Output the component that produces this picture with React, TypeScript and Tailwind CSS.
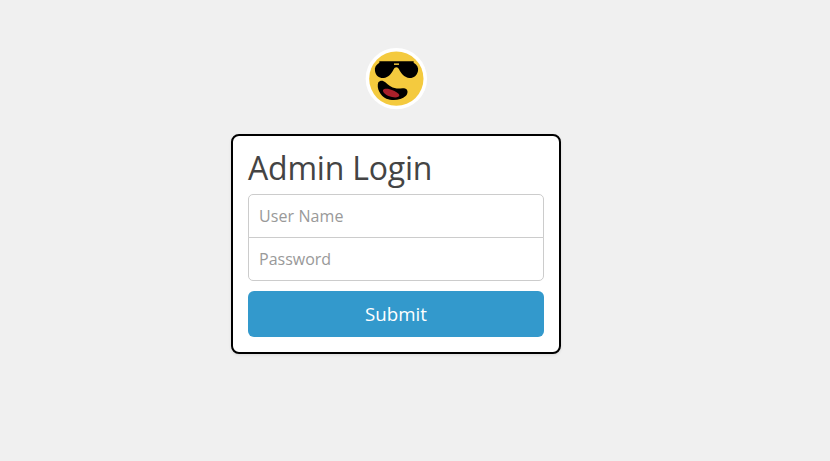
import React from "react";

function CoolFace() {
  return (
    <svg viewBox="27 30 186 186" className="block h-[62px] w-[62px]" aria-hidden="true">
      <circle cx="121" cy="122" r="92" fill="#fff" />
      <circle cx="121" cy="122" r="81.5" fill="#f4ca3e" />
      <path
        d="M70 70H173V74C184 80 188 89 186 99C183 113 172 121 160 120C146 119 136 108 129 94C126 86 116 86 113 94C106 108 97 119 83 120C70 121 59 113 57 99C55 88 60 80 70 74Z"
        fill="#000"
      />
      <path d="M114 76H129V81H114Z" fill="#d9b236" />
      <path
        d="M67 133C72 126 82 127 88 133C97 142 106 149 119 151C130 153 139 148 149 152C157 156 156 167 149 174C136 186 111 190 91 182C74 175 60 151 67 133Z"
        fill="#000"
      />
      <path
        d="M81 156C85 150 100 152 110 157C119 161 129 166 130 172C130 178 119 180 108 177C94 174 79 165 81 156Z"
        fill="#a9202a"
      />
    </svg>
  );
}

export default function App() {
  return (
    <main className="flex h-[461px] w-[830px] flex-col items-center bg-[#f0f0f0] pt-12 pr-[38px] font-['Open_Sans','Noto_Sans',sans-serif]">
      <CoolFace />
      <form
        onSubmit={(e) => e.preventDefault()}
        className="mt-6 flex h-[220px] w-[330px] flex-col rounded-lg border-2 border-black bg-white p-[15px] shadow-[0_1px_3px_rgba(0,0,0,0.1)]"
      >
        <h1 className="h-[43px] text-[32px] leading-[33px] tracking-[-0.2px] whitespace-nowrap text-[#444]">
          Admin Login
        </h1>
        <input
          type="text"
          placeholder="User Name"
          className="h-11 w-full shrink-0 rounded-t-[5px] border border-[#ccc] px-2.5 text-base tracking-[0.1px] text-[#444] outline-none placeholder:text-[#999]"
        />
        <input
          type="password"
          placeholder="Password"
          className="-mt-px h-11 w-full shrink-0 rounded-b-[5px] border border-[#ccc] px-2.5 text-base text-[#444] outline-none placeholder:text-[#999]"
        />
        <button
          type="submit"
          className="mt-2.5 h-[46px] w-full shrink-0 rounded-md bg-[#3399cc] text-[18.7px] text-white"
        >
          Submit
        </button>
      </form>
    </main>
  );
}
